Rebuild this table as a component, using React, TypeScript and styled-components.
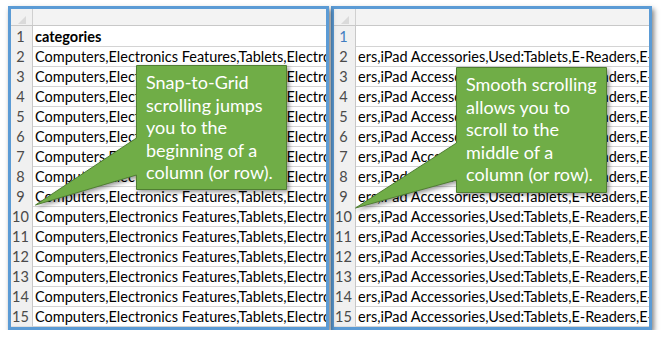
import React from "react";
import styled, { createGlobalStyle } from "styled-components";

const GlobalStyle = createGlobalStyle`
  html, body {
    margin: 0;
    padding: 0;
    background: #ffffff;
  }
  body {
    font-family: Lato, "Liberation Sans", sans-serif;
  }
`;

type CalloutSpec = {
  left: number;
  top: number;
  width: number;
  height: number;
  upper: number;
  lower: number;
  lines: string[];
};

type SheetSpec = {
  first: string;
  firstBold: boolean;
  text: string;
  accentFirst: boolean;
  callout: CalloutSpec;
};

const sheets: SheetSpec[] = [
  {
    first: "categories",
    firstBold: true,
    text: "Computers,Electronics Features,Tablets,Electro",
    accentFirst: false,
    callout: {
      left: 125,
      top: 56,
      width: 151,
      height: 125,
      upper: 73,
      lower: 110,
      lines: ["Snap-to-Grid", "scrolling jumps", "you to the", "beginning of a", "column (or row)."],
    },
  },
  {
    first: "",
    firstBold: false,
    text: "ers,iPad Accessories,Used:Tablets,E-Readers,E-R",
    accentFirst: true,
    callout: {
      left: 122,
      top: 58,
      width: 151,
      height: 126,
      upper: 76,
      lower: 113,
      lines: ["Smooth scrolling", "allows you to", "scroll to the", "middle of a", "column (or row)."],
    },
  },
];

const ROWS = 15;

const App: React.FC = () => {
  return (
    <>
      <GlobalStyle />
      <Page>
        {sheets.map((sheet, index) => (
          <Panel key={index} $front={index === 0}>
            <Sheet>
              <HeaderRow>
                <Corner />
                <ColHeader />
              </HeaderRow>
              {Array.from({ length: ROWS }, (_, i) => (
                <Row key={i}>
                  <RowNum $accent={i === 0 && sheet.accentFirst}>{i + 1}</RowNum>
                  <Cell $bold={i === 0 && sheet.firstBold}>
                    {i === 0 ? sheet.first : sheet.text}
                  </Cell>
                </Row>
              ))}
            </Sheet>
            <Callout
              $left={sheet.callout.left}
              $top={sheet.callout.top}
              $width={sheet.callout.width}
              $height={sheet.callout.height}
            >
              <CalloutShape
                width={sheet.callout.width + 102}
                height={sheet.callout.height + 18}
                viewBox={`0 0 ${sheet.callout.width + 102} ${sheet.callout.height + 18}`}
              >
                <path
                  d={`M101.5 0.5 H${sheet.callout.width + 100.5} V${sheet.callout.height - 0.5} H101.5 V${sheet.callout.lower} L0.5 ${sheet.callout.height + 15} L101.5 ${sheet.callout.upper} Z`}
                  fill="#70ad47"
                  stroke="#507e32"
                  strokeWidth="1"
                />
              </CalloutShape>
              <CalloutText>
                {sheet.callout.lines.map((line, li) => (
                  <div key={li}>{line}</div>
                ))}
              </CalloutText>
            </Callout>
          </Panel>
        ))}
      </Page>
    </>
  );
};

export default App;

const Page = styled.div`
  display: flex;
  gap: 2px;
  padding: 6px 0 0 8px;
`;

const Panel = styled.div<{ $front: boolean }>`
  position: relative;
  z-index: ${(p) => (p.$front ? 2 : 1)};
  width: 321px;
  height: 324px;
  box-sizing: border-box;
  border: 3px solid #5b9bd5;
  box-shadow: 2px 3px 5px rgba(0, 0, 0, 0.5);
  background: #ffffff;
`;

const Sheet = styled.div`
  width: 100%;
  height: 100%;
  overflow: hidden;
  display: flex;
  flex-direction: column;
`;

const HeaderRow = styled.div`
  display: grid;
  grid-template-columns: 22px 1fr;
  height: 17px;
  box-sizing: border-box;
  border-bottom: 1px solid #c8c8c8;
  background: #f1f1f1;
  flex-shrink: 0;
`;

const Corner = styled.div`
  position: relative;
  border-right: 1px solid #d0d0d0;
  &::after {
    content: "";
    position: absolute;
    right: 6px;
    bottom: 1px;
    width: 0;
    height: 0;
    border-left: 8px solid transparent;
    border-bottom: 8px solid #dadada;
  }
`;

const ColHeader = styled.div`
  background: #f3f3f3;
`;

const Row = styled.div`
  display: grid;
  grid-template-columns: 22px 1fr;
  height: 20px;
  box-sizing: border-box;
  flex-shrink: 0;
`;

const RowNum = styled.div<{ $accent: boolean }>`
  box-sizing: border-box;
  border-right: 1px solid #c8c8c8;
  border-bottom: 1px solid #dedede;
  background: #f0f0f0;
  color: ${(p) => (p.$accent ? "#3f7cc0" : "#4a4a4a")};
  font-size: 14.5px;
  line-height: 18px;
  padding: 2px 2px 0 0;
  text-align: center;
`;

const Cell = styled.div<{ $bold: boolean }>`
  box-sizing: border-box;
  border-bottom: 1px solid #d4d4d4;
  padding: 2px 0 0 2px;
  font-size: 14.5px;
  font-weight: ${(p) => (p.$bold ? 700 : 400)};
  line-height: 18px;
  color: #000000;
  white-space: nowrap;
  overflow: hidden;
`;

const Callout = styled.div<{ $left: number; $top: number; $width: number; $height: number }>`
  position: absolute;
  left: ${(p) => p.$left}px;
  top: ${(p) => p.$top}px;
  width: ${(p) => p.$width}px;
  height: ${(p) => p.$height}px;
`;

const CalloutShape = styled.svg`
  position: absolute;
  left: -101px;
  top: 0;
  overflow: visible;
  filter: drop-shadow(2px 2px 2px rgba(0, 0, 0, 0.4));
`;

const CalloutText = styled.div`
  position: relative;
  padding: 6px 0 0 10px;
  color: #ffffff;
  font-size: 18px;
  line-height: 22.5px;
  white-space: nowrap;
`;
